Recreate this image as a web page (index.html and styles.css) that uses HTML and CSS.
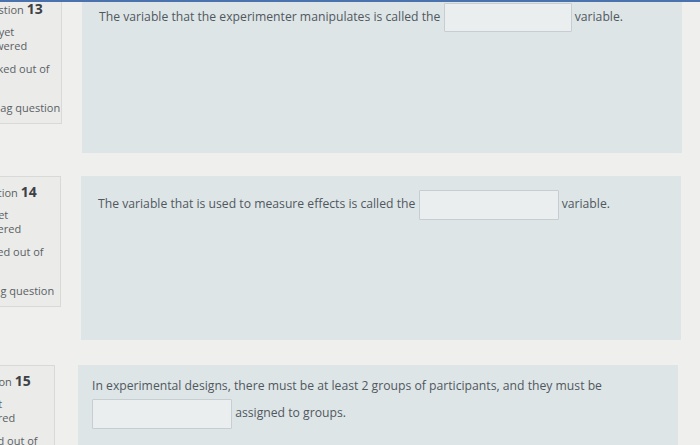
FILE: index.html
```html
<!DOCTYPE html>
<html lang="en">
<head>
  <meta charset="UTF-8">
  <title>Quiz</title>
  <link rel="stylesheet" href="styles.css">
</head>
<body>

  <div class="topbar"></div>

  <div class="page">

    <div class="que q13">
      <div class="info">
        <h3 class="no">Question <span class="qno">13</span></h3>
        <div class="state">Not yet answered</div>
        <div class="grade">Marked out of 1.00</div>
        <div class="flag">
          <svg class="flag-icon" viewBox="0 0 12 12" width="12" height="12"><path d="M2 1v10M2 1.5h7l-1.5 2.5 1.5 2.5h-7" fill="none" stroke="#888" stroke-width="1.2"/></svg>
          Flag question
        </div>
      </div>
      <div class="content">
        <p class="qtext">The variable that the experimenter manipulates is called the <input class="blank" type="text"> variable.</p>
      </div>
    </div>

    <div class="que q14">
      <div class="info">
        <h3 class="no">Question <span class="qno">14</span></h3>
        <div class="state">Not yet answered</div>
        <div class="grade">Marked out of 1.00</div>
        <div class="flag">
          <svg class="flag-icon" viewBox="0 0 12 12" width="12" height="12"><path d="M2 1v10M2 1.5h7l-1.5 2.5 1.5 2.5h-7" fill="none" stroke="#888" stroke-width="1.2"/></svg>
          Flag question
        </div>
      </div>
      <div class="content">
        <p class="qtext">The variable that is used to measure effects is called the <input class="blank" type="text"> variable.</p>
      </div>
    </div>

    <div class="que q15">
      <div class="info">
        <h3 class="no">Question <span class="qno">15</span></h3>
        <div class="state">Not yet answered</div>
        <div class="grade">Marked out of 1.00</div>
        <div class="flag">
          <svg class="flag-icon" viewBox="0 0 12 12" width="12" height="12"><path d="M2 1v10M2 1.5h7l-1.5 2.5 1.5 2.5h-7" fill="none" stroke="#888" stroke-width="1.2"/></svg>
          Flag question
        </div>
      </div>
      <div class="content">
        <p class="qtext">In experimental designs, there must be at least 2 groups of participants, and they must be <input class="blank" type="text"> assigned to groups.</p>
      </div>
    </div>

  </div>

</body>
</html>
```

FILE: styles.css
```css
body {
  margin: 0;
  background-color: #efefee;
  font-family: "Open Sans", sans-serif;
  color: #50585e;
  overflow: hidden;
}

.topbar {
  position: fixed;
  top: 0;
  left: 0;
  right: 0;
  height: 2px;
  background: #4a72ad;
  z-index: 2;
}

.page {
  margin-top: -7px;
}

.que {
  display: flex;
  align-items: flex-start;
  gap: 20px;
  margin-bottom: 23px;
}

/* the photo is cropped on the left, so the info column hangs off-screen */
.info {
  box-sizing: border-box;
  width: 94px;
  margin-left: -32px;
  padding: 8px 4px 8px 8px;
  background: #ebebea;
  border: 1px solid #d9d9d8;
  font-size: 11px;
  line-height: 14px;
  color: #5a5f63;
}

.q14 .info {
  width: 99px;
  margin-left: -38px;
}

.q15 .info {
  width: 99px;
  margin-left: -44px;
}

.no {
  margin: 0 0 8px;
  font-size: 11px;
  font-weight: normal;
}

.qno {
  font-size: 14px;
  font-weight: bold;
  color: #3c4146;
}

.state,
.grade {
  margin-bottom: 9px;
}

.flag {
  margin-top: 11px;
  white-space: nowrap;
}

.flag-icon {
  vertical-align: -2px;
}

.content {
  box-sizing: border-box;
  width: 600px;
  min-height: 160px;
  padding: 10px 17px;
  background: #dee5e7;
}

.q14 {
  margin-bottom: 25px;
}

.q14 .content {
  min-height: 164px;
  padding-top: 14px;
}

.q15 {
  gap: 23px;
}

.q15 .content {
  padding: 8px 14px;
}

.qtext {
  margin: 0;
  font-size: 12.2px;
  line-height: 28px;
}

.q15 .qtext {
  line-height: 26px;
}

.blank {
  box-sizing: border-box;
  width: 128px;
  height: 29px;
  margin: 0;
  vertical-align: middle;
  background: #eaeeef;
  border: 1px solid #c6ced1;
  border-radius: 1px;
}

.q14 .blank,
.q15 .blank {
  width: 140px;
  height: 30px;
}
```
